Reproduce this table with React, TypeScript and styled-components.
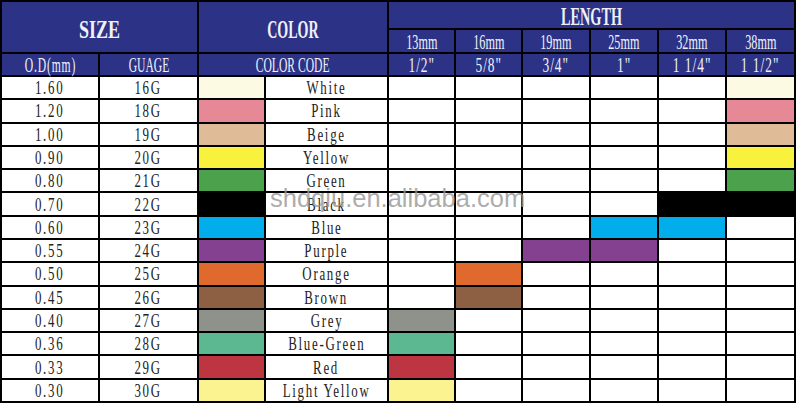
import { FC } from "react";
import styled, { createGlobalStyle } from "styled-components";

const GlobalStyle = createGlobalStyle`
  html, body {
    margin: 0;
    padding: 0;
    background: #fff;
  }
`;

type Row = {
    od: string;
    gauge: string;
    name: string;
    color: string;
    lengths: number[];
};

const lengths = [
    { mm: '13mm', inch: '1/2"' },
    { mm: '16mm', inch: '5/8"' },
    { mm: '19mm', inch: '3/4"' },
    { mm: '25mm', inch: '1"' },
    { mm: '32mm', inch: '1 1/4"' },
    { mm: '38mm', inch: '1 1/2"' },
];

// lengths holds indexes of the 13..38mm columns that get the colour
const rows: Row[] = [
    { od: '1.60', gauge: '16G', name: 'White', color: '#fdfae4', lengths: [5] },
    { od: '1.20', gauge: '18G', name: 'Pink', color: '#e78896', lengths: [5] },
    { od: '1.00', gauge: '19G', name: 'Beige', color: '#dfbb98', lengths: [5] },
    { od: '0.90', gauge: '20G', name: 'Yellow', color: '#f8f23c', lengths: [5] },
    { od: '0.80', gauge: '21G', name: 'Green', color: '#4ca24c', lengths: [5] },
    { od: '0.70', gauge: '22G', name: 'Black', color: '#000000', lengths: [4, 5] },
    { od: '0.60', gauge: '23G', name: 'Blue', color: '#02adec', lengths: [3, 4] },
    { od: '0.55', gauge: '24G', name: 'Purple', color: '#83418f', lengths: [2, 3] },
    { od: '0.50', gauge: '25G', name: 'Orange', color: '#e06a2d', lengths: [1] },
    { od: '0.45', gauge: '26G', name: 'Brown', color: '#8d5f43', lengths: [1] },
    { od: '0.40', gauge: '27G', name: 'Grey', color: '#8f928a', lengths: [0] },
    { od: '0.36', gauge: '28G', name: 'Blue-Green', color: '#5cb890', lengths: [0] },
    { od: '0.33', gauge: '29G', name: 'Red', color: '#bd3540', lengths: [0] },
    { od: '0.30', gauge: '30G', name: 'Light Yellow', color: '#fbf290', lengths: [0] },
];

const App: FC = () => {
    return (
        <>
            <GlobalStyle/>
            <SPage>
                <SSheet>
                    <SHead $col="1 / span 2" $row="1 / span 2" $shift={ 6 }>
                        <STitle $scale={ 0.72 }>SIZE</STitle>
                    </SHead>
                    <SHead $col="3 / span 2" $row="1 / span 2" $shift={ 6 }>
                        <STitle $scale={ 0.56 }>COLOR</STitle>
                    </SHead>
                    <SHead $col="5 / span 6" $row="1" $shift={ 4 }>
                        <STitle $scale={ 0.57 }>LENGTH</STitle>
                    </SHead>
                    { lengths.map((l, i) => (
                        <SHead key={ l.mm } $col={ `${ i + 5 }` } $row="2" $shift={ 1 }>
                            <SMm>{ l.mm }</SMm>
                        </SHead>
                    )) }
                    <SHead $col="1" $row="3" $shift={ 1 }><SLabel $spacing={ 1.5 }>O.D(mm)</SLabel></SHead>
                    <SHead $col="2" $row="3" $shift={ 1 }><SLabel>GUAGE</SLabel></SHead>
                    <SHead $col="3 / span 2" $row="3" $shift={ 1 }><SLabel>COLOR CODE</SLabel></SHead>
                    { lengths.map((l, i) => (
                        <SHead key={ l.inch } $col={ `${ i + 5 }` } $row="3" $shift={ 1 }>
                            <SLabel $size={ 21 } $spacing={ 1.5 } $scale={ 0.64 }>{ l.inch }</SLabel>
                        </SHead>
                    )) }

                    { rows.map((r) => [
                        <SCell key={ r.od + 'od' }><SText>{ r.od }</SText></SCell>,
                        <SCell key={ r.od + 'g' }><SText>{ r.gauge }</SText></SCell>,
                        <SCell key={ r.od + 'sw' } $bg={ r.color }/>,
                        <SCell key={ r.od + 'n' }><SText>{ r.name }</SText></SCell>,
                        ...lengths.map((_, i) => (
                            <SCell key={ r.od + 'l' + i } $bg={ r.lengths.includes(i) ? r.color : undefined }/>
                        )),
                    ]) }
                </SSheet>
                <SWatermark>shdqiu.en.alibaba.com</SWatermark>
            </SPage>
        </>
    )
}

export default App;

const SPage = styled.div`
  position: relative;
  width: 796px;
  height: 403px;
  overflow: hidden;
`;

const SSheet = styled.div`
  display: grid;
  grid-template-columns: 96px 97px 65px 121px 65px 65px 66px 66px 66px 67px;
  grid-template-rows: 26px 22px 21px repeat(14, 1fr);
  gap: 2px;
  padding: 2px;
  width: 796px;
  height: 403px;
  box-sizing: border-box;
  background: #000;
`;

const SHead = styled.div<{ $col: string; $row: string; $shift?: number }>`
  grid-column: ${ (p) => p.$col };
  grid-row: ${ (p) => p.$row };
  display: flex;
  align-items: center;
  justify-content: center;
  min-height: 0;
  padding-top: ${ (p) => p.$shift || 0 }px;
  box-sizing: border-box;
  background: #2c3386;
  color: #f0f1f8;
`;

const SCell = styled.div<{ $bg?: string }>`
  display: flex;
  align-items: center;
  justify-content: center;
  min-height: 0;
  padding-top: 1px;
  box-sizing: border-box;
  background: ${ (p) => p.$bg || '#fff' };
  color: #222;
`;

const STitle = styled.span<{ $scale: number }>`
  display: inline-block;
  font-family: "Liberation Serif", serif;
  font-weight: 700;
  font-size: 25px;
  line-height: 20px;
  transform: scaleX(${ (p) => p.$scale });
  white-space: nowrap;
`;

const SMm = styled.span`
  display: inline-block;
  font-family: "Liberation Serif", serif;
  font-size: 21px;
  line-height: 18px;
  transform: scaleX(0.58);
  white-space: nowrap;
`;

const SLabel = styled.span<{ $size?: number; $spacing?: number; $scale?: number }>`
  display: inline-block;
  font-family: "Liberation Serif", serif;
  font-size: ${ (p) => p.$size || 20 }px;
  letter-spacing: ${ (p) => p.$spacing ?? 0 }px;
  line-height: 18px;
  transform: scaleX(${ (p) => p.$scale ?? 0.58 });
  white-space: pre;
`;

const SText = styled.span`
  display: inline-block;
  font-family: "Liberation Serif", serif;
  font-size: 19px;
  letter-spacing: 2.5px;
  line-height: 18px;
  transform: scaleX(0.68);
  white-space: pre;
`;

const SWatermark = styled.div`
  position: absolute;
  left: 270px;
  top: 186px;
  font-family: "Liberation Sans", Arial, sans-serif;
  font-size: 25.5px;
  line-height: 1;
  color: rgba(150, 150, 150, 0.8);
  pointer-events: none;
  white-space: nowrap;
`;
